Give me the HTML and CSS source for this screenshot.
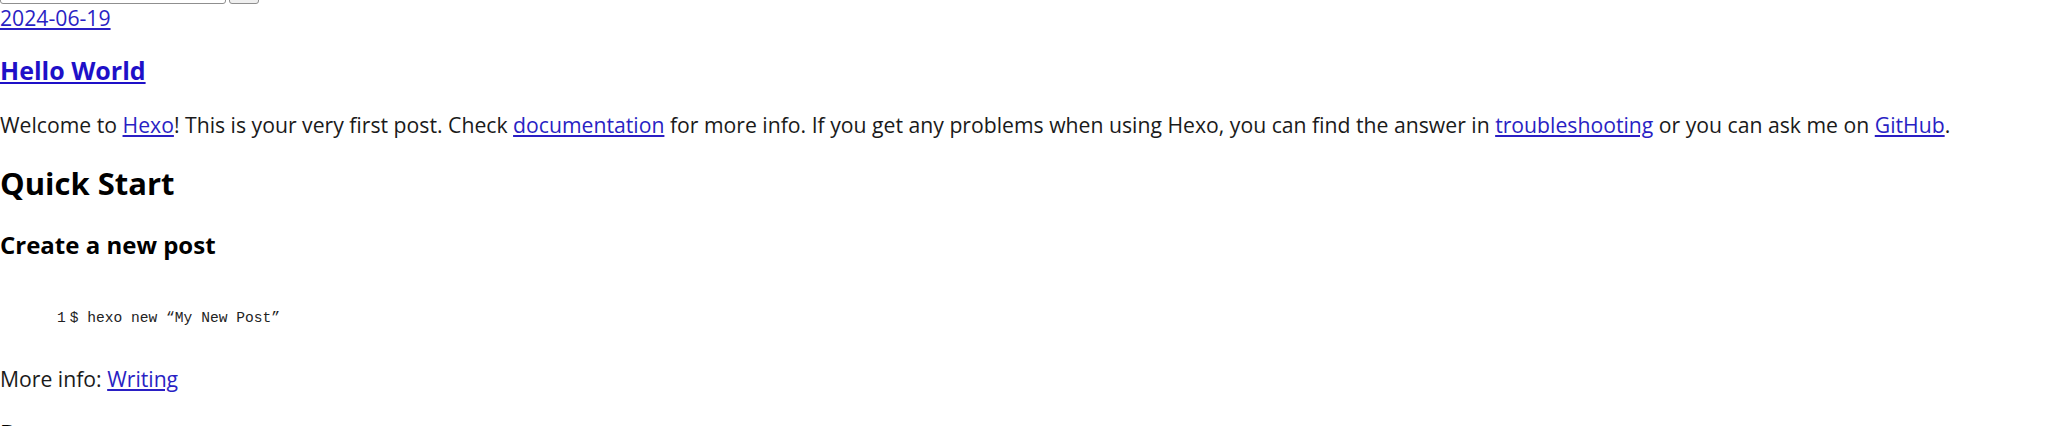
FILE: index.html
```html
<!DOCTYPE html>
<html lang="en">
<head>
<meta charset="utf-8">
<title>Hexo</title>
<link rel="stylesheet" href="styles.css">
</head>
<body>
<form class="search">
  <input class="search-input" type="search">
  <button class="search-btn" type="button"></button>
</form>
<article class="post">
  <a class="post-date" href="#">2024-06-19</a>
  <h1 class="post-title"><a href="#">Hello World</a></h1>
  <div class="post-body">
    <p class="para">Welcome to <a href="#">Hexo</a>! This is your very first post. Check <a href="#">documentation</a> for more info. If you get any problems when using Hexo, you can find the answer in <a href="#">troubleshooting</a> or you can ask me on <a href="#">GitHub</a>.</p>
    <h2 class="h-two">Quick Start</h2>
    <h3 class="h-three">Create a new post</h3>
    <figure class="highlight">
      <table class="code-table">
        <tr>
          <td class="gutter"><pre class="code-pre">1</pre></td>
          <td class="code"><pre class="code-pre">$ hexo new “My New Post”</pre></td>
        </tr>
      </table>
    </figure>
    <p class="para more-info">More info: <a href="#">Writing</a></p>
    <h3 class="h-three run">Run server</h3>
  </div>
</article>
</body>
</html>
```

FILE: styles.css
```css
html, body {
  margin: 0;
  padding: 0;
  background: #ffffff;
}
body {
  font-family: "Open Sans", "Noto Sans", sans-serif;
  font-size: 21.2px;
  line-height: 28px;
  color: #1a1a1a;
  overflow: hidden;
}
a {
  color: #2a1fc4;
}
.search {
  display: flex;
  gap: 3px;
  margin-top: -22px;
  height: 26px;
}
.search-input {
  width: 226px;
  height: 26px;
  box-sizing: border-box;
  border: 1px solid #8f8f8f;
  border-radius: 3px;
  margin: 0;
}
.search-btn {
  width: 30px;
  height: 26px;
  box-sizing: border-box;
  border: 1px solid #8f8f8f;
  border-radius: 3px;
  background: #efefef;
  margin: 0;
}
.post-date {
  display: block;
  width: max-content;
}
.post-title {
  font-size: 25px;
  line-height: 34px;
  margin: 21px 0 0;
}
.post-title a {
  color: #1e10c8;
}
.para {
  margin: 24px 0 0;
}
.more-info {
  margin-top: 37px;
}
.h-two {
  font-size: 31px;
  line-height: 42px;
  margin: 23px 0 0;
  color: #000;
}
.h-three {
  font-size: 24px;
  line-height: 33px;
  margin: 24px 0 0;
  color: #000;
}
.run {
  margin-top: 23px;
}
.highlight {
  margin: 47px 0 0 40px;
}
.code-table {
  border-collapse: collapse;
}
.code-table td {
  padding: 0;
}
.code-table .gutter {
  padding-left: 17px;
  padding-right: 4px;
}
.code-pre {
  margin: 0;
  font-family: "Liberation Mono", monospace;
  font-size: 14.6px;
  line-height: 20px;
  color: #222;
}
```
